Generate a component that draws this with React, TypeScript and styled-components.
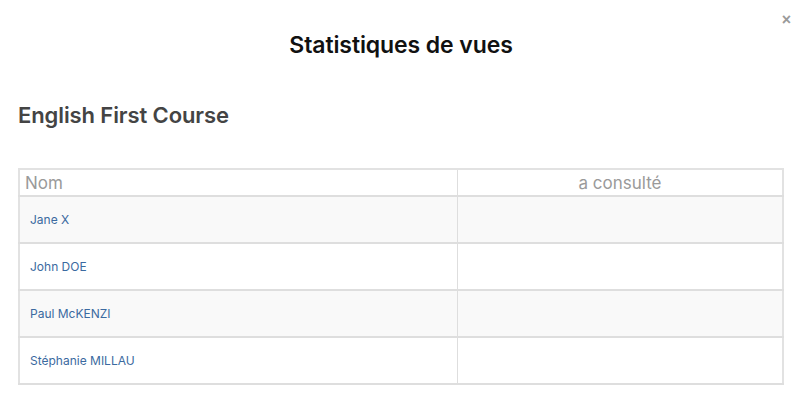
import React from "react";
import styled, { createGlobalStyle } from "styled-components";

const GlobalStyle = createGlobalStyle`
  html, body { margin: 0; padding: 0; background: #fff; }
  body { font-family: "Inter", "Liberation Sans", sans-serif; }
`;

const Modal = styled.div`
  position: relative;
  width: 800px;
  height: 408px;
  box-sizing: border-box;
  padding: 26px 16px 0 18px;
  background: #fff;
`;

const Close = styled.button`
  position: absolute;
  top: 11px;
  right: 9px;
  border: 0;
  background: transparent;
  color: #9a9a9a;
  font: 700 16px/18px "Liberation Sans", sans-serif;
  padding: 0;
  cursor: pointer;
`;

const Title = styled.h2`
  margin: 0;
  text-align: center;
  font: 600 23px/38px "Inter", sans-serif;
  letter-spacing: -0.1px;
  color: #111;
`;

const CourseName = styled.h3`
  margin: 32px 0 0;
  font: 600 22px/38px "Inter", sans-serif;
  color: #444;
  letter-spacing: -0.1px;
`;

const Table = styled.table`
  margin-top: 34px;
  width: 766px;
  border-collapse: collapse;
  border: 2px solid #e2e2e2;
`;

const HeadCell = styled.th<{ $center?: boolean }>`
  height: 25px;
  padding: 0 5px;
  border: 1px solid #dedede;
  border-bottom: 2px solid #dedede;
  text-align: ${(p) => (p.$center ? "center" : "left")};
  font: 400 17px/20px "Inter", sans-serif;
  color: #9a9a9a;
`;

const Row = styled.tr<{ $odd: boolean }>`
  background: ${(p) => (p.$odd ? "#f9f9f9" : "#fff")};
`;

const Cell = styled.td`
  height: 45px;
  padding: 0 10px;
  border: 1px solid #dedede;
  border-bottom: 2px solid #dedede;
  font: 400 12px/16px "Inter", sans-serif;
  color: #3b6aa0;
  width: 417px;
`;

const EmptyCell = styled.td`
  border: 1px solid #dedede;
  border-bottom: 2px solid #dedede;
`;

const names = ["Jane X", "John DOE", "Paul McKENZI", "Stéphanie MILLAU"];

export default function App() {
  return (
    <>
      <GlobalStyle />
      <Modal>
        <Close aria-label="Fermer">×</Close>
        <Title>Statistiques de vues</Title>
        <CourseName>English First Course</CourseName>
        <Table>
          <thead>
            <tr>
              <HeadCell>Nom</HeadCell>
              <HeadCell $center>a consulté</HeadCell>
            </tr>
          </thead>
          <tbody>
            {names.map((n, i) => (
              <Row key={n} $odd={i % 2 === 0}>
                <Cell>{n}</Cell>
                <EmptyCell />
              </Row>
            ))}
          </tbody>
        </Table>
      </Modal>
    </>
  );
}
